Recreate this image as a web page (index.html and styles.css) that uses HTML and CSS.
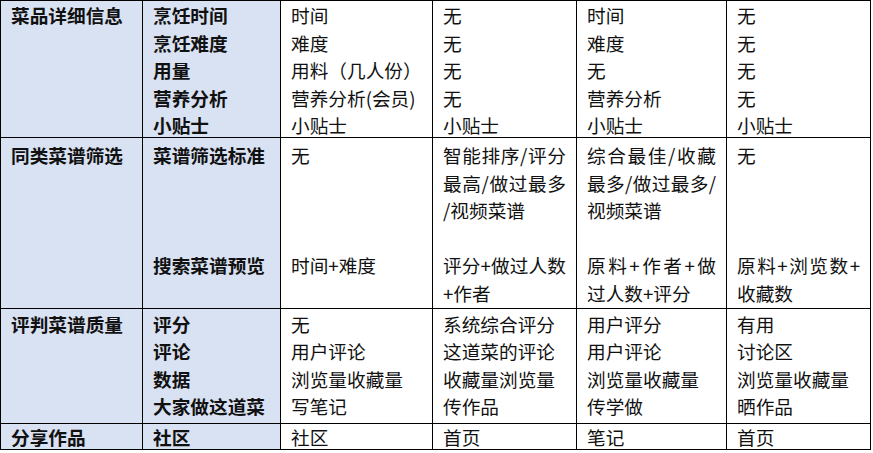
FILE: index.html
```html
<!DOCTYPE html>
<html lang="zh">
<head>
<meta charset="utf-8">
<title>菜谱应用对比</title>
<link rel="stylesheet" href="styles.css">
</head>
<body>
<table class="cmp">
  <colgroup>
    <col class="c1"><col class="c2"><col class="c3"><col class="c4"><col class="c5"><col class="c6">
  </colgroup>
  <tr class="r1">
    <td class="hd"><span class="ln">菜品详细信息</span></td>
    <td class="hd"><span class="ln">烹饪时间</span><span class="ln">烹饪难度</span><span class="ln">用量</span><span class="ln">营养分析</span><span class="ln">小贴士</span></td>
    <td><span class="ln">时间</span><span class="ln">难度</span><span class="ln">用料（几人份）</span><span class="ln">营养分析(会员)</span><span class="ln">小贴士</span></td>
    <td><span class="ln">无</span><span class="ln">无</span><span class="ln">无</span><span class="ln">无</span><span class="ln">小贴士</span></td>
    <td><span class="ln">时间</span><span class="ln">难度</span><span class="ln">无</span><span class="ln">营养分析</span><span class="ln">小贴士</span></td>
    <td><span class="ln">无</span><span class="ln">无</span><span class="ln">无</span><span class="ln">无</span><span class="ln">小贴士</span></td>
  </tr>
  <tr class="r2">
    <td class="hd"><span class="ln">同类菜谱筛选</span></td>
    <td class="hd"><span class="ln">菜谱筛选标准</span><span class="ln gap3">搜索菜谱预览</span></td>
    <td><span class="ln">无</span><span class="ln gap3">时间+难度</span></td>
    <td><span class="ln jl">智能排序/评分</span><span class="ln jl">最高/做过最多</span><span class="ln">/视频菜谱</span><span class="ln gap1 jl">评分+做过人数</span><span class="ln">+作者</span></td>
    <td><span class="ln jl">综合最佳/收藏</span><span class="ln jl">最多/做过最多/</span><span class="ln">视频菜谱</span><span class="ln gap1 jl">原料+作者+做</span><span class="ln">过人数+评分</span></td>
    <td><span class="ln">无</span><span class="ln gap3 jl">原料+浏览数+</span><span class="ln">收藏数</span></td>
  </tr>
  <tr class="r3">
    <td class="hd"><span class="ln">评判菜谱质量</span></td>
    <td class="hd"><span class="ln">评分</span><span class="ln">评论</span><span class="ln">数据</span><span class="ln">大家做这道菜</span></td>
    <td><span class="ln">无</span><span class="ln">用户评论</span><span class="ln">浏览量收藏量</span><span class="ln">写笔记</span></td>
    <td><span class="ln">系统综合评分</span><span class="ln">这道菜的评论</span><span class="ln">收藏量浏览量</span><span class="ln">传作品</span></td>
    <td><span class="ln">用户评分</span><span class="ln">用户评论</span><span class="ln">浏览量收藏量</span><span class="ln">传学做</span></td>
    <td><span class="ln">有用</span><span class="ln">讨论区</span><span class="ln">浏览量收藏量</span><span class="ln">晒作品</span></td>
  </tr>
  <tr class="r4">
    <td class="hd"><span class="ln">分享作品</span></td>
    <td class="hd"><span class="ln">社区</span></td>
    <td><span class="ln">社区</span></td>
    <td><span class="ln">首页</span></td>
    <td><span class="ln">笔记</span></td>
    <td><span class="ln">首页</span></td>
  </tr>
</table>
</body>
</html>
```

FILE: styles.css
```css
html, body {
  margin: 0;
  padding: 0;
  background: #ffffff;
}

.cmp {
  border-collapse: collapse;
  table-layout: fixed;
  width: 871px;
  font-family: "Noto Sans CJK SC", "Noto Sans", sans-serif;
  font-size: 18.67px;
  line-height: 26px;
  color: #111111;
}

.c1 { width: 142px; }
.c2 { width: 138px; }
.c3 { width: 152px; }
.c4 { width: 144px; }
.c5 { width: 150px; }
.c6 { width: 144px; }

.cmp td {
  border: 1px solid #000000;
  vertical-align: top;
  padding: 0 10px;
  white-space: nowrap;
}

.cmp td.hd {
  background: #d9e2f3;
  font-weight: 700;
}

.ln {
  display: block;
  height: 27.6px;
  overflow: visible;
}

.r1 td { padding-top: 1px; height: 135px; }
.r1 .ln:last-child { height: 24px; }
.r2 td { padding-top: 4px; height: 165px; }
.r3 td { padding-top: 2px; height: 112px; }
.r4 td { padding-top: 0; }
.r4 .ln { height: 25.5px; }

.gap3 { margin-top: 82.8px; }
.gap1 { margin-top: 27.6px; }
.jl { text-align: justify; text-align-last: justify; }
```
